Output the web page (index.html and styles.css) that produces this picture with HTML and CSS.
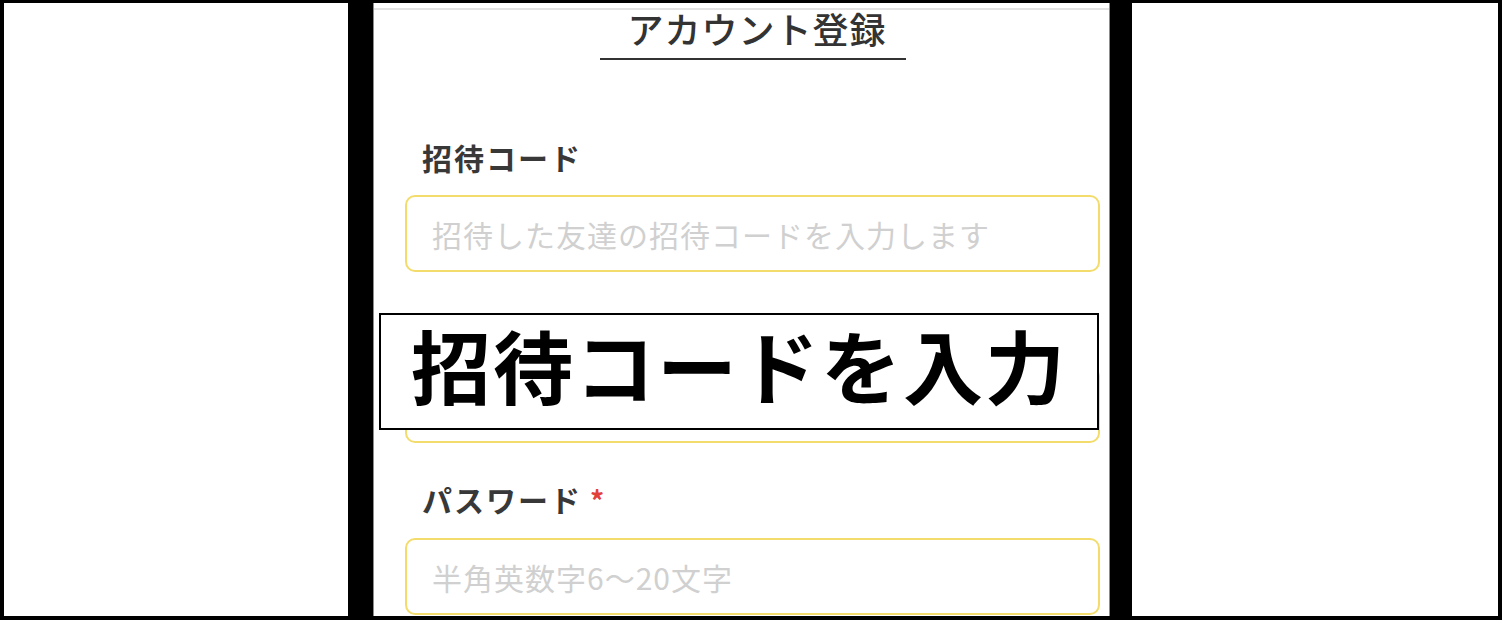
FILE: index.html
```html
<!DOCTYPE html>
<html lang="ja">
<head>
<meta charset="utf-8">
<title>アカウント登録</title>
<link rel="stylesheet" href="styles.css">
</head>
<body>
<div class="frame">
  <div class="side side-left"></div>
  <div class="phone">
    <div class="topbar"></div>
    <div class="head">
      <h1 class="title">アカウント登録</h1>
    </div>
    <form class="form">
      <div class="field">
        <label class="label">招待コード</label>
        <input class="input" type="text" placeholder="招待した友達の招待コードを入力します">
      </div>
      <div class="field">
        <div class="label label-empty"></div>
        <input class="input" type="text" aria-label="hidden field">
      </div>
      <div class="field">
        <label class="label">パスワード<span class="req">*</span></label>
        <input class="input" type="password" placeholder="半角英数字6〜20文字">
      </div>
    </form>
    <div class="caption">招待コードを入力</div>
  </div>
  <div class="side side-right"></div>
</div>
</body>
</html>
```

FILE: styles.css
```css
* { box-sizing: border-box; }
html, body {
  margin: 0;
  padding: 0;
  background: #000;
  width: 1502px;
  height: 620px;
  overflow: hidden;
  font-family: "Noto Sans CJK JP", "Noto Sans", sans-serif;
}
.frame {
  display: flex;
  height: 620px;
  padding: 3px 4px 4px 4px;
}
.side {
  background: #fff;
  height: 100%;
}
.side-left { width: 344px; margin-right: 25px; }
.side-right { width: 366px; margin-left: 22px; }
.phone {
  position: relative;
  width: 737px;
  height: 100%;
  background: #fff;
  border-left: 1px solid #8c8c8c;
  border-right: 1px solid #8c8c8c;
  overflow: hidden;
}
.topbar {
  height: 7px;
  border-bottom: 2px solid #e2e2e2;
}
.head {
  text-align: center;
  padding-left: 23px;
}
.title {
  display: inline-block;
  margin: 0;
  padding: 0 19px 12px 27px;
  font-size: 36px;
  line-height: 36px;
  font-weight: 500;
  letter-spacing: 1px;
  color: #333;
  border-bottom: 2px solid #333;
}
.form {
  padding: 82px 9px 0 31px;
}
.field {
  display: flex;
  flex-direction: column;
  margin-bottom: 41px;
}
.label {
  padding-left: 17px;
  font-size: 30px;
  line-height: 30px;
  font-weight: 700;
  letter-spacing: 2px;
  color: #383838;
  margin-bottom: 23px;
}
.label-empty {
  height: 30px;
}
.req {
  color: #e2403a;
  margin-left: 8px;
  font-size: 28px;
}
.input {
  width: 100%;
  height: 77px;
  border: 2px solid #f3dc6c;
  border-radius: 10px;
  padding: 0 25px;
  font-family: "Noto Sans CJK JP", "Noto Sans", sans-serif;
  font-size: 30px;
  letter-spacing: 1px;
  color: #333;
  background: #fff;
  outline: none;
}
.input::placeholder {
  color: #d0d0d0;
}
.caption {
  position: absolute;
  left: 5px;
  top: 310px;
  width: 720px;
  height: 117px;
  border: 2px solid #000;
  background: #fff;
  display: flex;
  align-items: center;
  justify-content: center;
  padding-bottom: 18px;
  font-size: 80px;
  font-weight: 700;
  letter-spacing: 2px;
  color: #000;
}
```
